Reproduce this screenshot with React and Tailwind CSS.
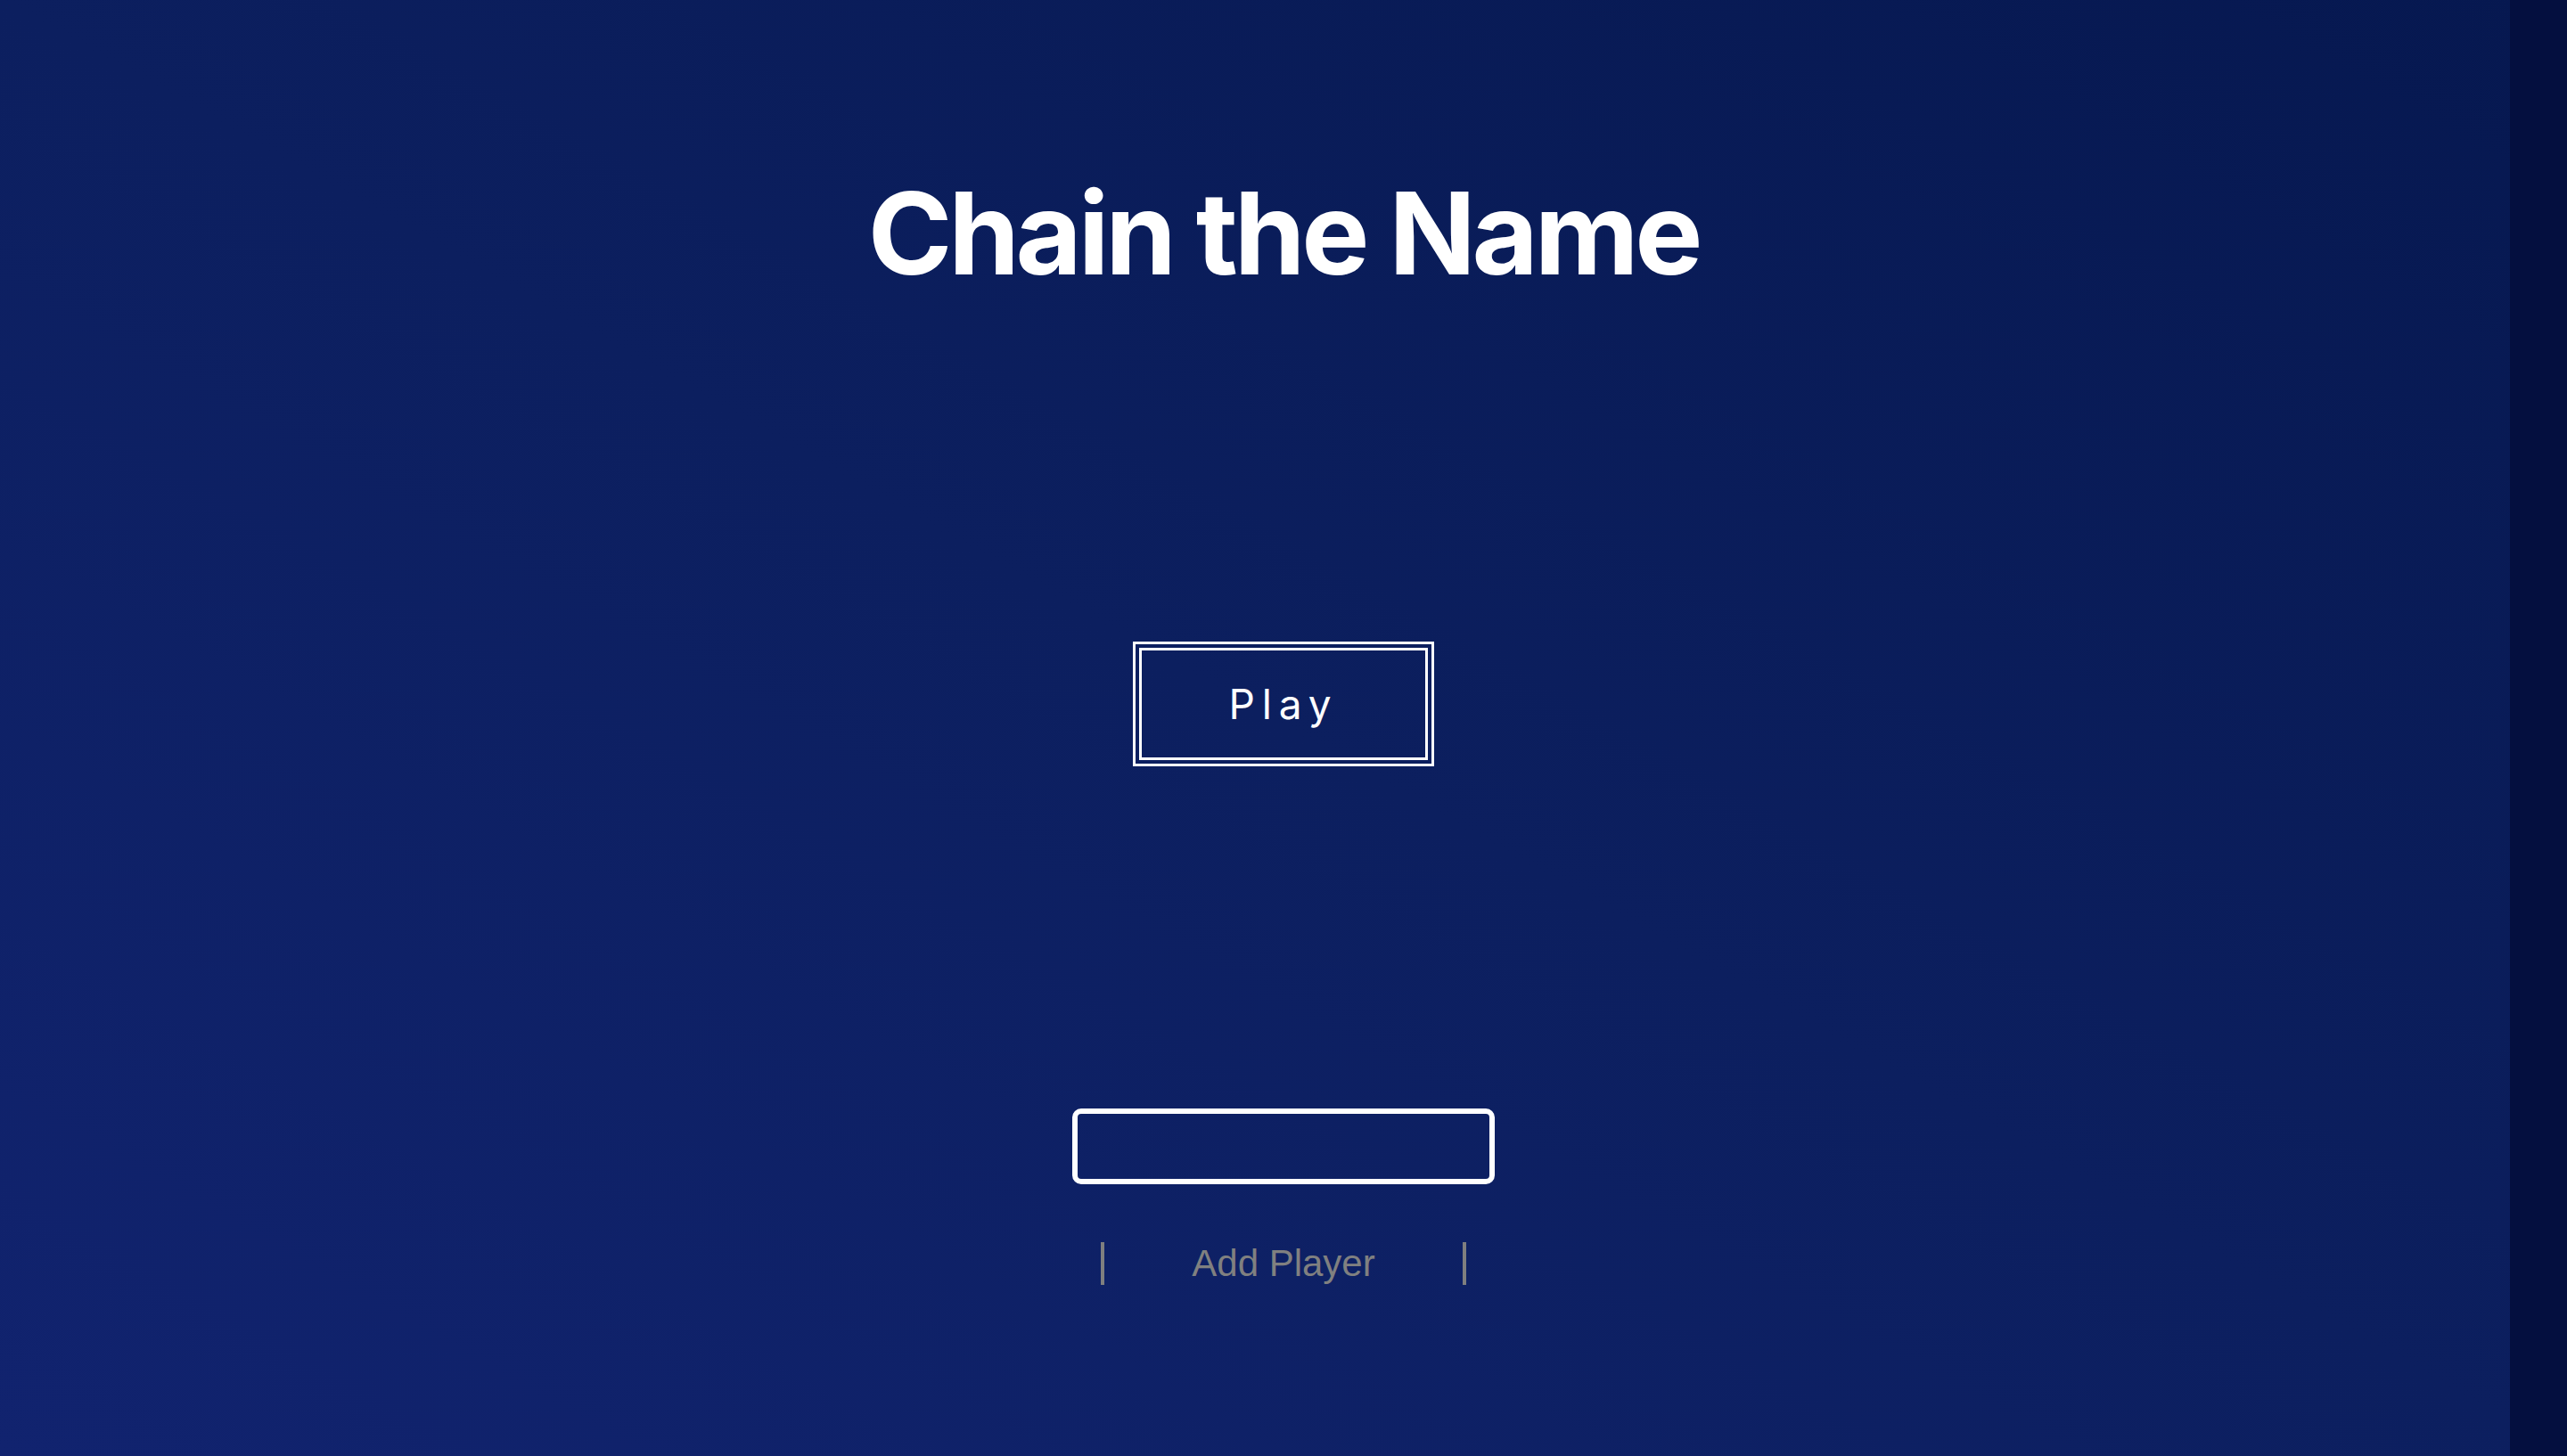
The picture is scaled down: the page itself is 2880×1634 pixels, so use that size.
export default function App() {
    return (
        <div className="relative h-[1634px] w-full overflow-hidden">
            <main className="flex h-full flex-col items-center bg-[linear-gradient(to_top_right,#11236f,#0c1f5f_50%,#061850)]">
                {/* Title */}
                <h1 className="mt-[198px] font-['Inter',sans-serif] text-[128px] font-bold leading-none tracking-[-0.033em] text-white">
                    Chain the Name
                </h1>

                {/* Play */}
                <button className="mt-[394px] flex h-[140px] w-[338px] items-center justify-center border-[10px] border-double border-white bg-transparent font-['Inter',sans-serif] text-[46px] leading-none tracking-[0.17em] text-white">
                    Play
                </button>

                {/* Player name */}
                <input
                    type="text"
                    className="mt-[384px] h-[85px] w-[474px] rounded-[10px] border-[6px] border-white bg-transparent px-4 text-[32px] text-white outline-none"
                />
                <button className="mt-[65px] h-[48px] w-[410px] border-x-4 border-[#7f7f7f] bg-transparent font-['Liberation_Sans',Arial,sans-serif] text-[42px] leading-[48px] text-[#808080]">
                    Add Player
                </button>
            </main>
            {/* scrollbar track */}
            <div className="absolute inset-y-0 right-0 w-[64px] bg-[#040f3f]" />
        </div>
    );
}
